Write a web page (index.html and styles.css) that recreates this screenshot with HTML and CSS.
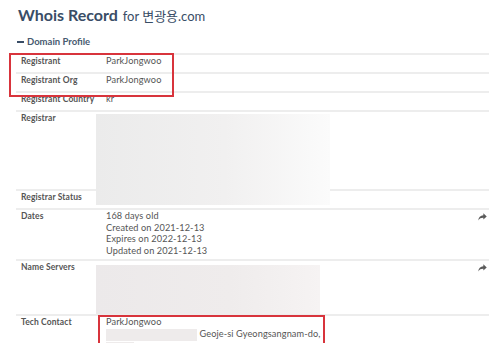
FILE: index.html
```html
<!DOCTYPE html>
<html lang="en">

<head>
    <meta charset="UTF-8">
    <meta name="viewport" content="width=device-width, initial-scale=1.0">
    <title>Whois Record for 변광용.com</title>
    <link rel="stylesheet" href="styles.css">
</head>

<body>
    <div class="page">
        <h1 class="title">Whois Record <span class="for">for 변광용.com</span></h1>
        <h2 class="section"><span class="dash"></span>Domain Profile</h2>

        <div class="record">
            <div class="highlight">
                <div class="row">
                    <div class="label">Registrant</div>
                    <div class="value">ParkJongwoo</div>
                </div>
                <div class="row">
                    <div class="label">Registrant Org</div>
                    <div class="value">ParkJongwoo</div>
                </div>
            </div>
            <div class="row">
                <div class="label">Registrant Country</div>
                <div class="value">kr</div>
            </div>
            <div class="row">
                <div class="label">Registrar</div>
                <div class="value">
                    <div class="redact redact-registrar"></div>
                </div>
            </div>
            <div class="row">
                <div class="label">Registrar Status</div>
                <div class="value"></div>
            </div>
            <div class="row row-dates">
                <div class="label">Dates</div>
                <div class="value">
                    168 days old<br>
                    Created on 2021-12-13<br>
                    Expires on 2022-12-13<br>
                    Updated on 2021-12-13
                </div>
                <div class="action">
                    <svg class="share" viewBox="0 0 16 14" width="9" height="8">
                        <path d="M9.5 0.5 L15.5 6 L9.5 11.5 V8.3 C5.6 8.2 2.6 9.4 0.5 13 C1 7.6 4.2 4.3 9.5 3.8 Z" />
                    </svg>
                </div>
            </div>
            <div class="row row-ns">
                <div class="label">Name Servers</div>
                <div class="value">
                    <div class="redact redact-ns"></div>
                </div>
                <div class="action">
                    <svg class="share" viewBox="0 0 16 14" width="9" height="8">
                        <path d="M9.5 0.5 L15.5 6 L9.5 11.5 V8.3 C5.6 8.2 2.6 9.4 0.5 13 C1 7.6 4.2 4.3 9.5 3.8 Z" />
                    </svg>
                </div>
            </div>
            <div class="row">
                <div class="label">Tech Contact</div>
                <div class="value boxed">
                    ParkJongwoo<br>
                    <span class="redact redact-line"></span> Geoje-si Gyeongsangnam-do,<br>
                    <span class="redact redact-short"></span>
                </div>
            </div>
        </div>
    </div>
</body>

</html>
```

FILE: styles.css
```css
* {
    margin: 0;
    padding: 0;
    box-sizing: border-box;
}

html,
body {
    overflow: hidden;
}

body {
    font-family: Lato, "Noto Sans CJK KR", sans-serif;
    background-color: #fff;
    color: #555;
}

.page {
    padding: 5px 11px 0 16px;
}

.title {
    font-size: 16px;
    line-height: 20px;
    font-weight: 700;
    color: #394d66;
    padding-left: 2px;
}

.for {
    font-size: 13px;
    font-weight: 400;
    margin-left: 1px;
}

/* Domain Profile toggle */
.section {
    margin-top: 10px;
    font-size: 9.5px;
    line-height: 12px;
    font-weight: 700;
    color: #485a70;
    display: flex;
    align-items: center;
}

.dash {
    width: 7px;
    height: 2px;
    background-color: #394d66;
    margin-left: 1px;
    margin-right: 3px;
}

.record {
    margin-top: 5px;
}

.row {
    display: grid;
    grid-template-columns: 84px 1fr 16px;
    border-top: 2px solid #ededed;
    padding: 0 0 5px 5px;
    font-size: 9.2px;
    line-height: 12px;
}

.label {
    font-size: 8.5px;
    font-weight: 700;
    color: #555;
    white-space: nowrap;
    letter-spacing: 0.1px;
}

.value {
    padding-left: 1px;
    color: #555;
    letter-spacing: 0.1px;
}

.row-dates {
    padding-bottom: 3px;
}

.row-dates .value {
    line-height: 11.5px;
}

.action {
    display: flex;
    justify-content: flex-end;
    padding-top: 3px;
    padding-right: 2px;
}

.share {
    fill: #5a5a5a;
}

/* blurred-out values */
.redact {
    position: relative;
    background: linear-gradient(90deg, #ebebeb, #f1f0f0 55%, #fbfbfb);
}

.redact-registrar {
    margin: 2px 0 -21px -10px;
    width: 234px;
    height: 91px;
}

.row-ns {
    padding-bottom: 0;
}

.redact-ns {
    margin: 4px 0 0 -10px;
    width: 224px;
    height: 49px;
    background: linear-gradient(90deg, #ece9ea, #efecec 60%, #f6f3f3);
}

.redact-line,
.redact-short {
    display: inline-block;
    vertical-align: top;
    height: 12px;
    margin-top: 1px;
    background: #eeebeb;
}

.redact-line {
    width: 91px;
}

.redact-short {
    width: 28px;
}

/* red annotation boxes */
.highlight {
    position: relative;
}

.highlight::after {
    content: "";
    position: absolute;
    left: -7px;
    top: 0;
    width: 161px;
    height: 40px;
    border: 2px solid #d8343c;
}

.boxed {
    position: relative;
}

.boxed::after {
    content: "";
    position: absolute;
    left: -7px;
    top: -1px;
    width: 223px;
    height: 60px;
    border: 2px solid #d8343c;
}
```
